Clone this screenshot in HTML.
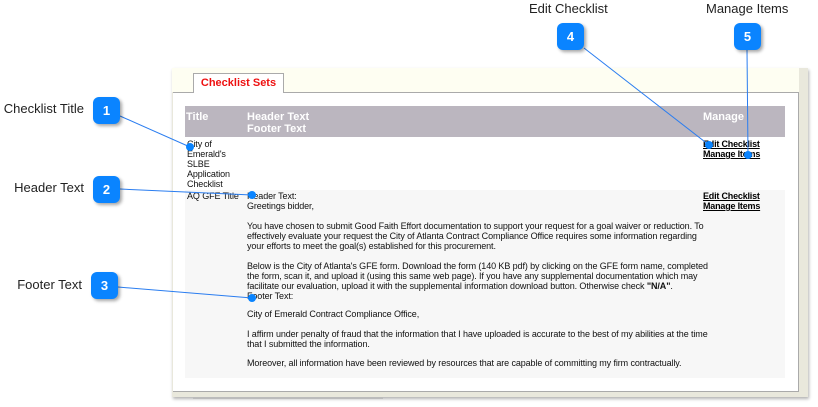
<!DOCTYPE html>
<html><head><meta charset="utf-8"><style>
body{margin:0;width:818px;height:407px;background:#fff;position:relative;overflow:hidden;font-family:"Liberation Sans",Arial,sans-serif}
.a{position:absolute}
.lbl{font-size:13px;color:#222}
.badge{position:absolute;width:27px;height:27px;border-radius:6px;background:#0a84ff;color:#fff;font-weight:bold;font-size:13px;text-align:center;line-height:27px;box-shadow:2px 2px 3px rgba(0,0,0,.35)}
.t{font-size:9px;line-height:10px;color:#111;letter-spacing:-0.1px;white-space:nowrap}
.lk{font-size:9px;line-height:10px;color:#000;font-weight:bold;text-decoration:underline;letter-spacing:-0.2px}
p{margin:0}
.h{color:#fff;font-weight:bold;font-size:11px;line-height:12px}
</style></head><body>
<div class="a" style="left:172px;top:68px;width:636px;height:329px;background:#e9e8dc;box-shadow:1px 2px 3px rgba(0,0,0,.3)"></div>
<div class="a" style="left:172px;top:68px;width:627px;height:24px;background:#fefef2"></div>
<div class="a" style="left:173px;top:92px;width:625px;height:298px;background:#fff;border:1px solid #aaa;border-left:none"></div>
<div class="a" style="left:193px;top:73px;width:89px;height:19px;background:#fff;border:1px solid #aaa;border-bottom:none;color:#e11;font-weight:bold;font-size:11px;text-align:center;line-height:18px">Checklist Sets</div>
<div class="a" style="left:185px;top:106px;width:600px;height:31px;background:#bbb6bf"></div>
<div class="a h" style="left:186px;top:111px">Title</div>
<div class="a h" style="left:247px;top:111px">Header Text<br>Footer Text</div>
<div class="a h" style="left:703px;top:111px">Manage</div>
<div class="a" style="left:185px;top:190px;width:600px;height:188px;background:#f7f7f7"></div>
<div class="a t" style="left:187px;top:139px">City of<br>Emerald's<br>SLBE<br>Application<br>Checklist</div>
<div class="a lk" style="left:703px;top:139px">Edit Checklist<br>Manage Items</div>
<div class="a t" style="left:187px;top:191px">AQ GFE Title</div>
<div class="a lk" style="left:703px;top:191px">Edit Checklist<br>Manage Items</div>
<div class="a t" style="left:247px;top:191px">
<p>Header Text:<br>Greetings bidder,</p><br>
<p>You have chosen to submit Good Faith Effort documentation to support your request for a goal waiver or reduction. To<br>effectively evaluate your request the City of Atlanta Contract Compliance Office requires some information regarding<br>your efforts to meet the goal(s) established for this procurement.</p><br>
<p>Below is the City of Atlanta's GFE form. Download the form (140 KB pdf) by clicking on the GFE form name, completed<br>the form, scan it, and upload it (using this same web page). If you have any supplemental documentation which may<br>facilitate our evaluation, upload it with the supplemental information download button. Otherwise check <b>"N/A"</b>.</p>
<p>Footer Text:</p>
<p style="margin-top:8px">City of Emerald Contract Compliance Office,</p><br>
<p>I affirm under penalty of fraud that the information that I have uploaded is accurate to the best of my abilities at the time<br>that I submitted the information.</p>
<p style="margin-top:9px">Moreover, all information have been reviewed by resources that are capable of committing my firm contractually.</p>
</div>
<div class="a" style="left:193px;top:397px;width:190px;height:2px;background:#bbb"></div>
<svg class="a" style="left:0;top:0" width="818" height="407">
<g stroke="#2a7df0" stroke-width="1" fill="none">
<line x1="120" y1="116" x2="190" y2="147"/>
<line x1="120" y1="189" x2="252" y2="195"/>
<line x1="118" y1="287" x2="252" y2="298"/>
<line x1="584" y1="48" x2="709" y2="145"/>
<line x1="747" y1="50" x2="748" y2="155"/>
</g>
<g fill="#0a84ff">
<circle cx="190" cy="147" r="4"/><circle cx="252" cy="195" r="4"/><circle cx="252" cy="298" r="4"/>
<circle cx="709" cy="145" r="4"/><circle cx="748" cy="155" r="4"/>
</g>
</svg>
<div class="a lbl" style="right:734px;top:101px">Checklist Title</div>
<div class="a lbl" style="right:734px;top:180px">Header Text</div>
<div class="a lbl" style="right:736px;top:277px">Footer Text</div>
<div class="a lbl" style="left:529px;top:1px">Edit Checklist</div>
<div class="a lbl" style="left:706px;top:1px">Manage Items</div>
<div class="badge" style="left:93px;top:97px">1</div>
<div class="badge" style="left:93px;top:176px">2</div>
<div class="badge" style="left:91px;top:272px">3</div>
<div class="badge" style="left:557px;top:23px">4</div>
<div class="badge" style="left:734px;top:23px">5</div>
</body></html>
